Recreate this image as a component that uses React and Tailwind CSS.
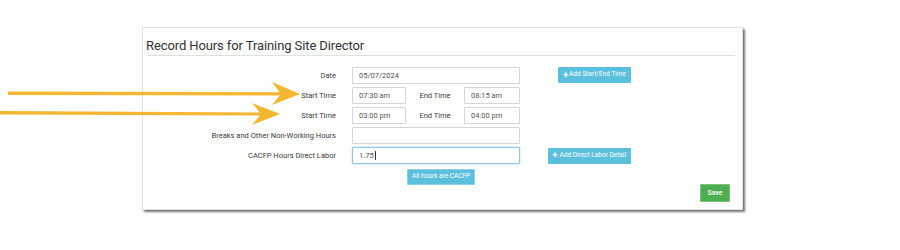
import React from "react";

const font = { fontFamily: "Roboto, 'Liberation Sans', sans-serif" };

function Label({ children }) {
  return (
    <div className="w-[190px] shrink-0 text-right text-[7.5px] leading-none text-[#3a3a3a]">
      {children}
    </div>
  );
}

function Input({ value, w = "w-[168px]", focus = false }) {
  return (
    <div
      className={`${w} h-[17px] shrink-0 flex items-center px-[6px] bg-white rounded-[1px] text-[7.5px] text-[#555] border ${
        focus ? "border-[#8cc4ea] shadow-[0_0_2px_rgba(102,175,233,0.5)]" : "border-[#d6d6d6]"
      }`}
    >
      {value}
    </div>
  );
}

function InfoButton({ children }) {
  return (
    <div className="h-[16px] px-[4px] flex items-center bg-[#5bc0de] text-white text-[6.5px] rounded-[1px] border border-[#5bc0de] whitespace-nowrap">
      {children}
    </div>
  );
}

export default function App() {
  return (
    <div className="relative w-[900px] h-[250px] bg-white pt-[27px] pl-[142px]" style={font}>
      <div className="w-[601px] h-[183px] bg-white border border-[#e3e3e3] shadow-[2px_2px_2px_rgba(0,0,0,0.55)] pl-[3px] pr-[7px] pt-[10px]">
        <div className="text-[13px] leading-[16px] text-[#333] tracking-[-0.1px]">
          Record Hours for Training Site Director
        </div>
        <div className="h-px bg-[#e0e0e0] mt-[1px] ml-px" />
        <div className="flex flex-col gap-[3px] mt-[11px]">
          <div className="flex items-center">
            <Label>Date</Label>
            <div className="ml-[16px]">
              <Input value="05/07/2024" />
            </div>
            <div className="w-[111px] flex justify-end self-start">
              <InfoButton>
                <span className="text-[9px] mr-[1px] font-bold leading-none">+</span>Add Start/End Time
              </InfoButton>
            </div>
          </div>
          <div className="flex items-center">
            <Label>Start Time</Label>
            <div className="ml-[16px] flex items-center">
              <Input value="07:30 am" w="w-[54px]" />
              <div className="w-[58px] text-center text-[7.5px] text-[#3a3a3a]">End Time</div>
              <Input value="08:15 am" w="w-[56px]" />
            </div>
          </div>
          <div className="flex items-center">
            <Label>Start Time</Label>
            <div className="ml-[16px] flex items-center">
              <Input value="03:00 pm" w="w-[54px]" />
              <div className="w-[58px] text-center text-[7.5px] text-[#3a3a3a]">End Time</div>
              <Input value="04:00 pm" w="w-[56px]" />
            </div>
          </div>
          <div className="flex items-center">
            <Label>Breaks and Other Non-Working Hours</Label>
            <div className="ml-[16px]">
              <Input value="" />
            </div>
          </div>
          <div className="flex items-center">
            <Label>CACFP Hours Direct Labor</Label>
            <div className="ml-[16px]">
              <Input value={<span>1.75<span className="inline-block w-px h-[9px] bg-[#333] align-middle ml-px" /></span>} focus />
            </div>
            <div className="w-[111px] flex justify-end">
              <InfoButton>
                <span className="text-[9px] mr-[2px] font-bold leading-none">+</span>Add Direct Labor Detail
              </InfoButton>
            </div>
          </div>
        </div>
        <div className="flex mt-[5px] pl-[261px]">
          <div className="h-[16px] px-[4px] flex items-center bg-[#5bc0de] text-white text-[6.5px] rounded-[1px] border border-[#8ad0e6]">
            All hours are CACFP
          </div>
        </div>
        <div className="flex justify-end -mt-[1px] pr-[5px]">
          <div className="h-[18px] w-[30px] flex items-center justify-center bg-[#4cae4c] text-white text-[7px] font-medium rounded-[1px] border border-[#7cc47c]">
            Save
          </div>
        </div>
      </div>
      <svg className="absolute left-0 top-0 pointer-events-none" width="900" height="250" viewBox="0 0 900 250">
        <g fill="#f5b731">
          <polygon points="8,91.5 282,92.3 282,95.5 8,95" />
          <path d="M272,82 L300,94 L272,105 L281,94 Z" />
          <polygon points="0,111 262,112.5 262,115.5 0,114.5" />
          <path d="M252,103 L280,114 L252,125 L261,114 Z" />
        </g>
      </svg>
    </div>
  );
}
